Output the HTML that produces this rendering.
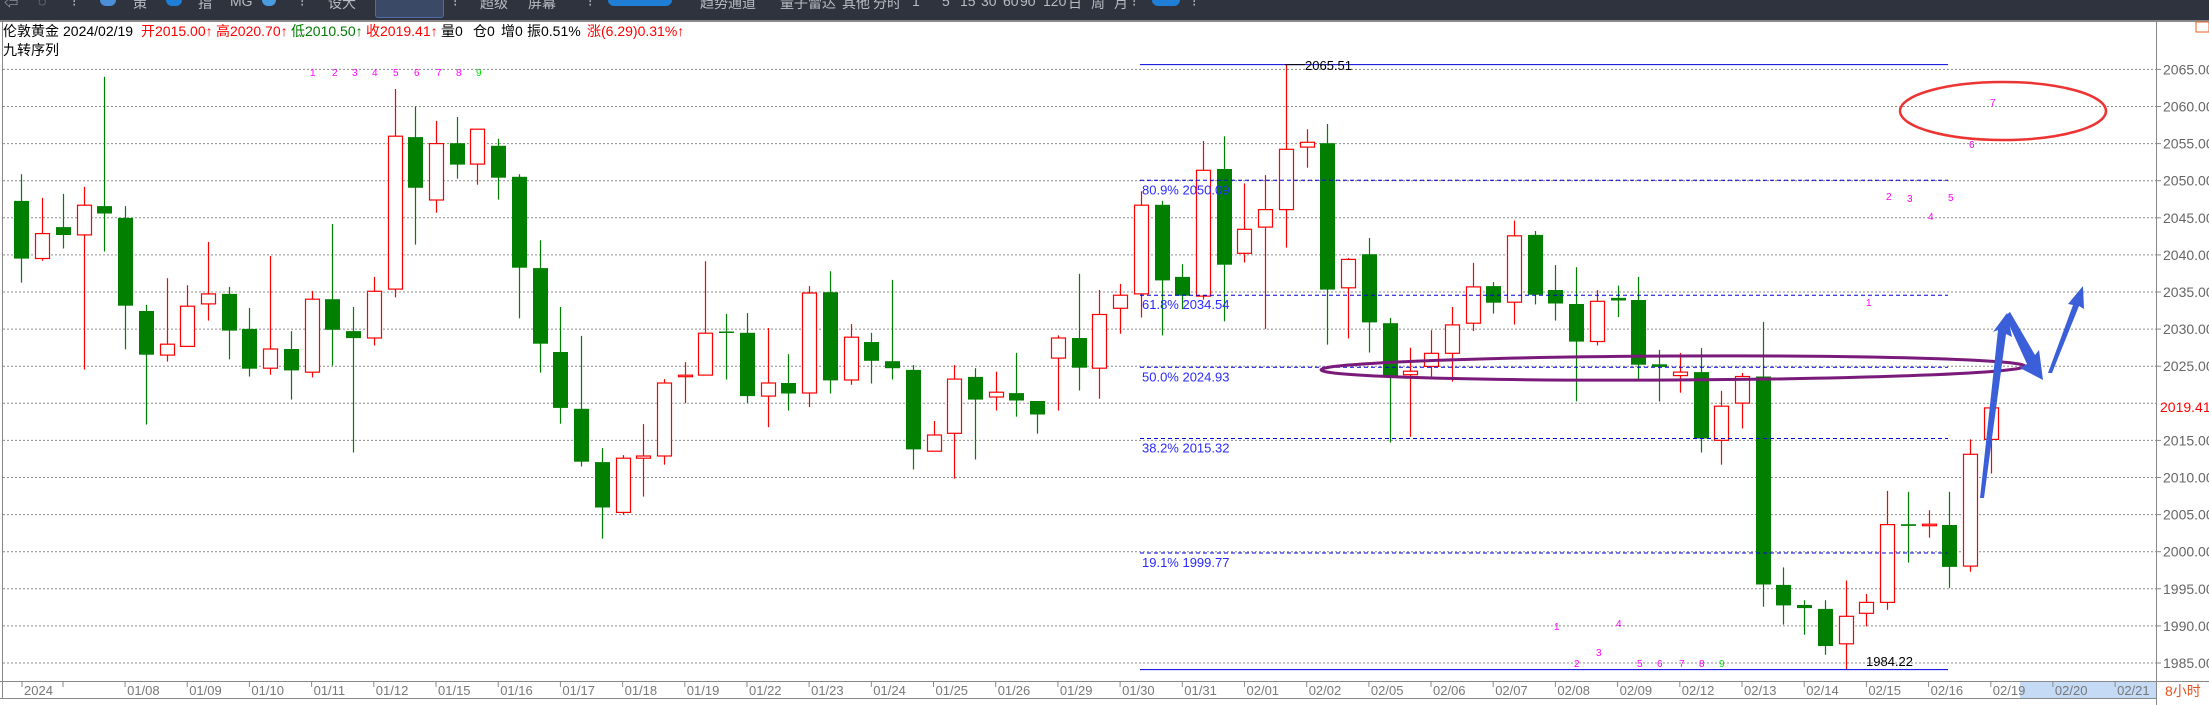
<!DOCTYPE html>
<html><head><meta charset="utf-8">
<style>
html,body{margin:0;padding:0;background:#fff;width:2209px;height:705px;overflow:hidden;position:relative;font-family:"Liberation Sans","Noto Sans CJK SC",sans-serif;}
#tb{position:absolute;left:0;top:0;width:2209px;height:20px;background:#2e333d;overflow:hidden;}
#tb span{position:absolute;top:-7px;font-size:14px;color:#b9bcc2;white-space:nowrap;}
.pill{position:absolute;top:-8px;height:14px;background:#1f7fd6;border-radius:6px;}
#hl{position:absolute;left:0;top:20px;width:2209px;height:2px;background:#8a8a8a;}
.h{position:absolute;font-size:14px;white-space:nowrap;line-height:16px;}
svg{position:absolute;left:0;top:0;}
</style></head><body>
<div id="tb">
<span style="left:4px">⇦</span><span style="left:38px">◌</span><span style="left:72px">⁝</span>
<div class="pill" style="left:100px;width:16px;background:#4a8fd8"></div>
<span style="left:133px">策</span>
<div class="pill" style="left:166px;width:16px;"></div>
<span style="left:198px">指</span><span style="left:230px">MG</span>
<div class="pill" style="left:262px;width:14px;background:#4a9be0"></div>
<span style="left:300px">⁝</span><span style="left:328px">设大</span>
<div style="position:absolute;left:375px;top:-4px;width:67px;height:20px;background:#3a4a66;border:1px solid #4b6da8;border-radius:3px"></div>
<span style="left:453px">⁝</span><span style="left:480px">超级</span><span style="left:528px">屏幕</span><span style="left:588px">⁝</span>
<div class="pill" style="left:608px;width:64px;"></div>
<span style="left:700px">趋势通道</span><span style="left:780px">量子雷达</span><span style="left:842px">其他</span>
<span style="left:860px">⁝</span><span style="left:873px">分时</span><span style="left:912px">1</span><span style="left:942px">5</span><span style="left:960px">15</span><span style="left:981px">30</span><span style="left:1003px">60</span><span style="left:1020px">90</span><span style="left:1043px">120</span><span style="left:1068px">日</span><span style="left:1091px">周</span><span style="left:1114px">月</span><span style="left:1132px">⁝</span>
<div class="pill" style="left:1152px;width:28px;"></div>
<span style="left:1192px">⁝</span>
</div>
<div id="hl"></div>
<svg id="s" width="2209" height="705" xmlns="http://www.w3.org/2000/svg"></svg>
<div class="h" style="left:3px;top:23px;color:#000">伦敦黄金</div>
<div class="h" style="left:63px;top:23px;color:#000">2024/02/19</div>
<div class="h" style="left:141px;top:23px;color:#f00">开2015.00↑</div>
<div class="h" style="left:216px;top:23px;color:#f00">高2020.70↑</div>
<div class="h" style="left:291px;top:23px;color:#007a00">低2010.50↑</div>
<div class="h" style="left:366px;top:23px;color:#f00">收2019.41↑</div>
<div class="h" style="left:441px;top:23px;color:#000">量0</div>
<div class="h" style="left:473px;top:23px;color:#000">仓0</div>
<div class="h" style="left:501px;top:23px;color:#000">增0</div>
<div class="h" style="left:527px;top:23px;color:#000">振0.51%</div>
<div class="h" style="left:587px;top:23px;color:#f00">涨(6.29)0.31%↑</div>
<div class="h" style="left:3px;top:42px;color:#000">九转序列</div>
<script>
const s=document.getElementById('s');let h='';
const Y=v=>20+v/2.289, X=i=>21.4+20.73*i;
for(let k=0;k<17;k++){const y=(69.4+k*37.1).toFixed(1);
h+=`<line x1="3" y1="${y}" x2="2156" y2="${y}" stroke="#8c8c8c" stroke-dasharray="2,2" stroke-width="1"/>`;
h+=`<line x1="2156" y1="${y}" x2="2161" y2="${y}" stroke="#888"/>`;
h+=`<text x="2163" y="${(+y+5).toFixed(1)}" font-size="14" fill="#666" font-family="Liberation Sans">${(2065-5*k).toFixed(2)}</text>`;}
h+=`<line x1="2.5" y1="21" x2="2.5" y2="698" stroke="#888"/>`;
h+=`<line x1="2156.5" y1="21" x2="2156.5" y2="705" stroke="#888"/>`;
h+=`<rect x="2020" y="682" width="136" height="16" fill="#c5daf4"/>`;
h+=`<line x1="0" y1="681.5" x2="2209" y2="681.5" stroke="#888"/>`;
h+=`<line x1="0" y1="698.5" x2="2156" y2="698.5" stroke="#888"/>`;
h+=`<rect x="2196" y="22" width="13" height="10" fill="none" stroke="#e86020"/>`;
const d=['01/08','01/09','01/10','01/11','01/12','01/15','01/16','01/17','01/18','01/19','01/22','01/23','01/24','01/25','01/26','01/29','01/30','01/31','02/01','02/02','02/05','02/06','02/07','02/08','02/09','02/12','02/13','02/14','02/15','02/16','02/19','02/20','02/21'];
h+=`<line x1="22" y1="682" x2="22" y2="687" stroke="#888"/><text x="24" y="695" font-size="13" fill="#777" font-family="Liberation Sans">2024</text>`;
h+=`<line x1="63" y1="682" x2="63" y2="687" stroke="#888"/>`;
d.forEach((t,k)=>{const x=X(2+3*(k+1)).toFixed(1);h+=`<line x1="${x}" y1="682" x2="${x}" y2="687" stroke="#888"/><text x="${+x+2}" y="695" font-size="13" fill="#777" font-family="Liberation Sans">${t}</text>`;});
h+=`<text x="2165" y="696" font-size="14" fill="#e8501e" font-family="Liberation Sans,Noto Sans CJK SC,sans-serif">8小时</text>`;
const c=[['G',414,546,353,601],['R',489,546,407,551],['G',474,492,398,523],['R',424,492,382,800],['G',426,443,130,530],['G',453,654,426,754],['G',666,766,652,926],['R',742,767,591,782],['R',655,747,607,747],['R',627,650,508,688],
['G',627,711,611,777],['G',707,798,659,816],['R',753,797,540,812],['G',753,802,712,869],['R',639,806,620,818],['G',639,709,467,791],['G',712,728,657,990],['R',621,728,588,745],['R',266,616,158,635],['G',268,384,198,514],
['R',283,412,231,441],['G',282,331,222,363],['R',250,330,250,377],['G',288,361,272,411],['G',359,567,353,683],['G',568,741,504,807],['G',760,888,657,924],['G',890,1011,723,1022],['G',1012,1116,980,1187],['R',1003,1127,996,1133],
['R',998,1003,925,1091],['R',831,998,822,1018],['R',813,815,783,877],['R',717,813,552,813],['G',713,716,673,823],['G',716,861,671,877],['R',831,861,705,932],['G',831,855,765,894],['R',625,854,609,886],['G',623,825,575,855],
['R',726,824,696,835],['G',737,780,716,832],['G',781,797,595,823],['G',801,983,790,1029],['R',950,987,918,987],['R',822,946,790,1050],['G',817,869,797,1006],['R',852,863,805,894],['G',854,871,762,908],['G',872,903,872,947],
['R',728,774,722,894],['G',728,796,581,848],['R',674,797,618,867],['R',630,660,604,718],['R',424,627,392,681],['G',423,596,414,722],['G',588,631,559,662],['R',344,632,277,640],['G',341,560,266,690],['R',479,534,374,555],
['R',434,474,355,707],['R',296,434,102,521],['R',280,291,250,338],['G',282,617,238,743],['R',548,613,545,729],['G',536,692,499,761],['G',694,817,682,967],['R',804,812,750,954],['R',763,793,710,822],['R',698,763,657,828],
['R',611,694,556,712],['G',609,647,600,672],['R',494,646,459,697],['G',492,629,483,651],['G',618,649,561,688],['G',650,736,566,873],['R',644,736,618,745],['G',636,642,608,680],['G',641,789,588,823],['G',788,794,755,873],
['R',806,814,762,853],['G',806,958,751,990],['R',884,962,849,1018],['R',816,877,808,935],['G',816,1292,691,1343],['G',1293,1340,1253,1384],['G',1339,1346,1328,1407],['G',1348,1433,1328,1453],['R',1365,1428,1283,1486],['R',1333,1358,1314,1388],
['R',1155,1333,1078,1350],['G',1154,1158,1080,1242],['R',1154,1156,1122,1185],['G',1156,1252,1080,1300],['R',994,1250,960,1263],['R',888,960,866,1038]];
c.forEach((k,i)=>{const x=Math.round(X(i))+0.5;const col=k[0]=='R'?'#ff0000':'#007f00';
const t=Y(k[1]),b=Y(k[2]),hi=Y(k[3]),lo=Y(k[4]);
h+=`<line x1="${x}" y1="${hi.toFixed(1)}" x2="${x}" y2="${lo.toFixed(1)}" stroke="${col}" stroke-width="1.2"/>`;
const bh=Math.max(b-t,1.5);
if(k[0]=='R')h+=`<rect x="${x-7}" y="${t.toFixed(1)}" width="14" height="${bh.toFixed(1)}" fill="#fff" stroke="#ff0000" stroke-width="1.2"/>`;
else h+=`<rect x="${x-7.5}" y="${t.toFixed(1)}" width="15" height="${bh.toFixed(1)}" fill="#007f00"/>`;});
const fx1=1140,fx2=1948;
[[367,'80.9% 2050.09'],[630,'61.8% 2034.54'],[795,'50.0% 2024.93'],[958,'38.2% 2015.32'],[1220,'19.1% 1999.77']].forEach(f=>{const y=Y(f[0]).toFixed(1);
h+=`<line x1="${fx1}" y1="${y}" x2="${fx2}" y2="${y}" stroke="#0000dd" stroke-dasharray="4,3" stroke-width="1"/>`;
h+=`<text x="1142" y="${(+y+14).toFixed(1)}" font-size="13" fill="#2a2aff" font-family="Liberation Sans">${f[1]}</text>`;});
h+=`<line x1="${fx1}" y1="${Y(102).toFixed(1)}" x2="${fx2}" y2="${Y(102).toFixed(1)}" stroke="#0000dd"/>`;
h+=`<line x1="${fx1}" y1="${Y(1487).toFixed(1)}" x2="${fx2}" y2="${Y(1487).toFixed(1)}" stroke="#0000dd"/>`;
h+=`<line x1="1285" y1="${Y(102).toFixed(1)}" x2="1305" y2="${Y(102).toFixed(1)}" stroke="#000"/>`;
h+=`<text x="1305" y="70" font-size="13" fill="#000" font-family="Liberation Sans">2065.51</text>`;
h+=`<text x="1866" y="666" font-size="13" fill="#000" font-family="Liberation Sans">1984.22</text>`;
h+=`<ellipse cx="2003" cy="111" rx="103" ry="29" fill="none" stroke="#ee3333" stroke-width="2.5"/>`;
h+=`<ellipse cx="1673" cy="368" rx="352" ry="12" fill="none" stroke="#7a1a7a" stroke-width="3" transform="rotate(-0.3 1673 368)"/>`;
h+=`<rect x="2157" y="398" width="52" height="18" fill="#fff"/><text x="2160" y="412" font-size="14" fill="#ff0000" font-family="Liberation Sans">2019.41</text>`;
const m='#ff00ff',gn='#00dd00';
const nums=[[313,76,'1',m],[335,76,'2',m],[355,76,'3',m],[375,76,'4',m],[396,76,'5',m],[417,76,'6',m],[439,76,'7',m],[459,76,'8',m],[479,76,'9',gn],
[1557,630,'1',m],[1577,667,'2',m],[1599,656,'3',m],[1619,627,'4',m],[1640,667,'5',m],[1660,667,'6',m],[1682,667,'7',m],[1702,667,'8',m],[1722,667,'9',gn],
[1869,306,'1',m],[1889,200,'2',m],[1910,202,'3',m],[1931,220,'4',m],[1951,201,'5',m],[1972,148,'6',m],[1993,106,'7',m]];
nums.forEach(n=>h+=`<text x="${n[0]-3}" y="${n[1]}" font-size="10" fill="${n[3]}" font-family="Liberation Sans">${n[2]}</text>`);
const bl='#3a5fd8';
h+=`<polygon points="1980,498 1998,330 1993,332 2007,313 2012,337 2006,334 1984,498" fill="${bl}"/>`;
h+=`<polygon points="2005,316 2010,312 2035,355 2039,350 2043,380 2020,368 2027,364" fill="${bl}"/>`;
h+=`<polygon points="2048,373 2073,305 2068,304 2083,286 2084,309 2079,306 2052,373" fill="${bl}"/>`;
s.innerHTML=h;
</script>
</body></html>
